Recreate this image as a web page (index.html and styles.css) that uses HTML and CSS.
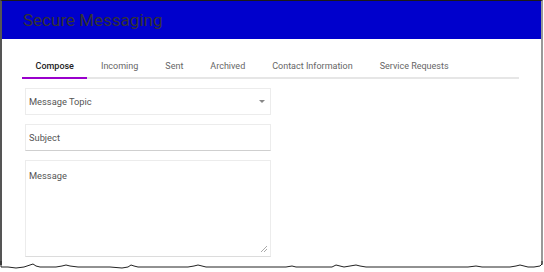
FILE: index.html
```html
<!DOCTYPE html>
<html lang="en">
<head>
    <meta charset="UTF-8">
    <title>Secure Messaging</title>
    <link rel="stylesheet" href="styles.css">
</head>
<body>
    <div class="frame">
        <div class="header">
            <h1>Secure Messaging</h1>
        </div>

        <!-- Tabs -->
        <div class="tabs">
            <div class="tab active">Compose</div>
            <div class="tab">Incoming</div>
            <div class="tab">Sent</div>
            <div class="tab">Archived</div>
            <div class="tab">Contact Information</div>
            <div class="tab">Service Requests</div>
        </div>

        <!-- Compose form -->
        <div class="form">
            <div class="field select">
                <span>Message Topic</span>
                <svg width="6" height="3" viewBox="0 0 6 3"><path d="M0 0h6L3 3z" fill="#888"/></svg>
            </div>
            <input class="field subject" type="text" placeholder="Subject">
            <div class="message-wrap">
                <textarea class="field message" placeholder="Message"></textarea>
                <svg class="grip" width="6" height="6" viewBox="0 0 6 6"><path d="M6 0L0 6M6 3L3 6" stroke="#aaa" stroke-width="1"/></svg>
            </div>
        </div>
    </div>
    <svg class="torn" width="544" height="10" viewBox="0 0 544 10">
        <polyline fill="none" stroke="#222" stroke-width="1"
            points="1,0 1,6 8,6 16,7 24,6 30,4 33,3 36,5 40,6 48,6 56,6 62,5 66,4 70,5 78,6 90,6 100,6 110,6 122,7 128,6 131,4 134,5 138,6 150,6 160,6 170,6 180,6 188,6 194,5 198,4 202,5 206,6 214,6 222,6 232,6 244,6 256,6 266,6 276,6 286,6 292,5 296,6 302,6 312,6 324,6 332,6 336,4 340,5 344,6 350,5 356,4 360,5 366,6 376,6 390,6 402,6 412,6 422,6 432,6 444,6 456,6 468,6 476,5 482,6 490,6 500,6 510,6 516,5 520,4 524,5 528,6 534,6 540,5 542,3 542,0"/>
    </svg>
</body>
</html>
```

FILE: styles.css
```css
body {
    margin: 0;
    background: #fff;
    font-family: 'Roboto', 'Liberation Sans', sans-serif;
    color: #333;
}
.frame {
    width: 539px;
    height: 264px;
    border-top: 1px solid #1a1a1a;
    border-left: 2px solid #555;
    border-right: 2px solid #999;
    overflow: hidden;
}
.header {
    height: 38px;
    background: #0000cc;
    padding-left: 21px;
    display: flex;
    align-items: center;
}
.header h1 {
    margin: 0;
    font-size: 17px;
    font-weight: 400;
    color: #333;
}
.tabs {
    display: flex;
    margin: 17px 22px 0 20px;
    border-bottom: 2px solid #e6e6e6;
}
.tab {
    padding: 0 13.5px;
    height: 21px;
    line-height: 21px;
    font-size: 9px;
    font-weight: 400;
    color: #666;
    border-bottom: 2px solid transparent;
    margin-bottom: -2px;
}
.tab.active {
    color: #222;
    font-weight: 500;
    border-bottom-color: #9900cc;
}
.form {
    display: flex;
    flex-direction: column;
    gap: 9px;
    width: 246px;
    margin: 9px 0 0 23px;
}
.field {
    box-sizing: border-box;
    width: 246px;
    border: 1px solid #ececec;
    font-family: inherit;
    font-size: 9.3px;
    color: #555;
    padding: 0 3px;
    margin: 0;
    outline: none;
    background: #fff;
}
.field::placeholder {
    color: #555;
}
.select {
    height: 27px;
    display: flex;
    align-items: center;
    justify-content: space-between;
    padding-right: 5px;
}
.subject {
    height: 27px;
    border-bottom-color: #cfcfcf;
}
.message-wrap {
    position: relative;
    height: 97px;
}
.message {
    display: block;
    height: 97px;
    padding-top: 9px;
    resize: none;
    border-bottom-color: #dcdcdc;
}
.grip {
    position: absolute;
    right: 4px;
    bottom: 5px;
}
.torn {
    display: block;
    margin-top: -4px;
}
```
